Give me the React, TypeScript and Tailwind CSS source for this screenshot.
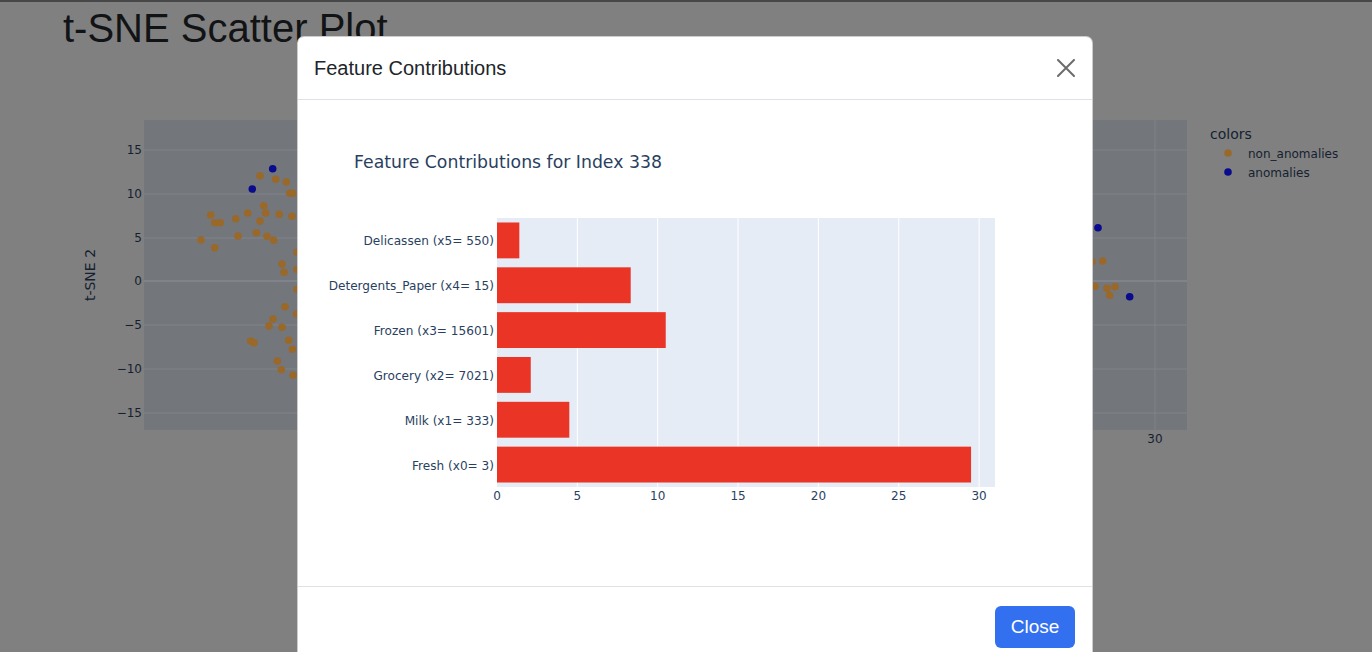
import React from 'react';

// page coordinates of the scatter points that peek out around the modal
const orangeDots: [number, number][] = [
  [260, 175.7], [275.7, 179.3], [286.3, 182], [289.7, 193.3], [292.7, 193.3],
  [210.7, 215], [214.7, 222.7], [220.3, 222.7], [235.7, 218.7], [247.7, 213],
  [263.7, 205.7], [265.7, 213], [260, 221], [279.3, 214.3], [292, 216.3],
  [201, 240], [214.7, 247.7], [238, 236], [256.3, 232.7], [267, 236.3],
  [273.7, 240.3], [297, 252.3], [282, 264], [284, 272.3], [297, 269.3],
  [297, 289.3], [285, 306.7], [296.5, 314], [273, 319], [269, 326],
  [282, 327.3], [288.7, 340.3], [292.3, 349.3], [250.7, 341], [254, 342.7],
  [277.3, 361], [281.3, 369.7], [293, 375.3],
  [1092, 261.7], [1102.7, 261], [1095, 286.3], [1107, 288.3], [1115, 286.7],
  [1109.7, 295.3],
];

const blueDots: [number, number][] = [
  [272.7, 168.7], [252.3, 189], [1098, 227.7], [1129.7, 296.7],
];

const yTicks = [
  { label: '15', y: 150 },
  { label: '10', y: 194 },
  { label: '5', y: 238 },
  { label: '0', y: 281 },
  { label: '−5', y: 325 },
  { label: '−10', y: 369 },
  { label: '−15', y: 413 },
];

const contributions = [
  { name: 'Delicassen (x5= 550)', value: 1.39 },
  { name: 'Detergents_Paper (x4= 15)', value: 8.32 },
  { name: 'Frozen (x3= 15601)', value: 10.5 },
  { name: 'Grocery (x2= 7021)', value: 2.1 },
  { name: 'Milk (x1= 333)', value: 4.5 },
  { name: 'Fresh (x0= 3)', value: 29.5 },
];

// svg under the heading starts at this page y
const SCATTER_TOP = 52;

function ScatterFigure() {
  return (
    <svg width={1372} height={652 - SCATTER_TOP} className="block font-['DejaVu_Sans',Verdana,sans-serif]">
      <g transform={`translate(0,${-SCATTER_TOP})`}>
        <rect x={144} y={120} width={1043} height={310} fill="#73767b" />
        {yTicks.map((t) => (
          <line
            key={t.label}
            x1={144}
            x2={1187}
            y1={t.y}
            y2={t.y}
            stroke="#80838a"
            strokeWidth={t.label === '0' ? 2 : 1}
          />
        ))}
        <line x1={1155} x2={1155} y1={120} y2={430} stroke="#80838a" strokeWidth={1} />
        {orangeDots.map(([x, y], i) => (
          <circle key={'o' + i} cx={x} cy={y} r={3.8} fill="#9a6829" />
        ))}
        {blueDots.map(([x, y], i) => (
          <circle key={'b' + i} cx={x} cy={y} r={3.8} fill="#0a0a8e" />
        ))}
        {yTicks.map((t) => (
          <text key={'l' + t.label} x={142} y={t.y + 4} fontSize={12} textAnchor="end" fill="#151f30">
            {t.label}
          </text>
        ))}
        <text x={1155} y={443} fontSize={12} textAnchor="middle" fill="#151f30">
          30
        </text>
        <text
          x={95}
          y={275}
          fontSize={14}
          textAnchor="middle"
          fill="#151f30"
          transform="rotate(-90 95 275)"
        >
          t-SNE 2
        </text>

        {/* legend */}
        <text x={1210} y={139} fontSize={14} fill="#151f30">
          colors
        </text>
        <circle cx={1228} cy={153} r={3.8} fill="#9a6829" />
        <text x={1248} y={158} fontSize={12} fill="#151f30">
          non_anomalies
        </text>
        <circle cx={1228} cy={172} r={3.8} fill="#0a0a8e" />
        <text x={1248} y={177} fontSize={12} fill="#151f30">
          anomalies
        </text>
      </g>
    </svg>
  );
}

function ContributionChart() {
  const x0 = 497;
  const unit = 16.07;
  const top = 218;
  const band = 269 / 6;
  const xTicks = [0, 5, 10, 15, 20, 25, 30];

  return (
    <svg width={794} height={486} className="block font-['DejaVu_Sans',Verdana,sans-serif]">
      <g transform="translate(-298,-100)">
        <text x={354} y={168} fontSize={17.3} fill="#2a3f5f">
          Feature Contributions for Index 338
        </text>
        <rect x={x0} y={top} width={498} height={269} fill="#e5ecf6" />
        {xTicks.slice(1).map((t) => (
          <line key={t} x1={x0 + t * unit} x2={x0 + t * unit} y1={top} y2={top + 269} stroke="#ffffff" strokeWidth={1} />
        ))}
        {contributions.map((c, i) => {
          const cy = top + band * i + band / 2;
          return (
            <g key={c.name}>
              <rect x={x0} y={cy - band * 0.4} width={c.value * unit} height={band * 0.8} fill="#ea3526" />
              <text x={494} y={cy + 5} fontSize={12.1} textAnchor="end" fill="#2a3f5f">
                {c.name}
              </text>
            </g>
          );
        })}
        {xTicks.map((t) => (
          <text key={'t' + t} x={x0 + t * unit} y={500} fontSize={12} textAnchor="middle" fill="#2a3f5f">
            {t}
          </text>
        ))}
      </g>
    </svg>
  );
}

function FeatureModal() {
  return (
    <div className="absolute left-[297px] top-[36px] w-[796px] rounded-[7px] border border-black/20 bg-white">
      <div className="flex h-[63px] items-center justify-between border-b border-[#dee2e6] pl-4 pr-[17px]">
        <h5 className="text-[20px] leading-[30px] text-[#212529]">Feature Contributions</h5>
        <button className="flex h-[18px] w-[18px] items-center justify-center">
          <svg width={18} height={18} viewBox="0 0 18 18">
            <path d="M1 1 L17 17 M17 1 L1 17" stroke="#6c6c6c" strokeWidth={2} strokeLinecap="round" />
          </svg>
        </button>
      </div>
      <div className="h-[486px]">
        <ContributionChart />
      </div>
      <div className="flex h-[120px] justify-end border-t border-[#dee2e6] pr-[17px] pt-[19px]">
        <button className="h-[42px] w-[80px] rounded-[6px] bg-[#3270f0] text-[19px] font-medium text-white">
          Close
        </button>
      </div>
    </div>
  );
}

export default function App() {
  return (
    <div className="relative h-[652px] w-[1372px] overflow-hidden bg-[#808080] font-['Liberation_Sans',Arial,sans-serif]">
      <div className="h-[2px] bg-[#474747]" />
      <h1 className="pl-[63px] pt-[2px] text-[40px] font-medium leading-[48px] text-[#111315]">t-SNE Scatter Plot</h1>
      <ScatterFigure />
      <FeatureModal />
    </div>
  );
}
